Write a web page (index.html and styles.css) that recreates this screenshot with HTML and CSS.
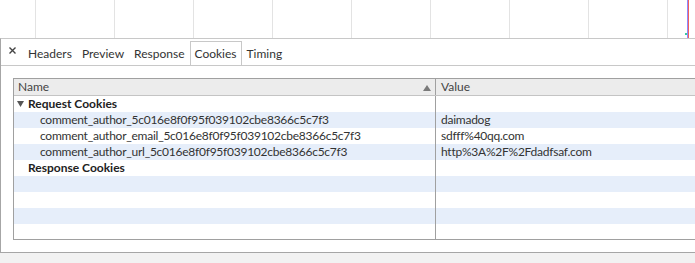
FILE: index.html
```html
<!DOCTYPE html>
<html lang="en">
<head>
  <meta charset="UTF-8">
  <title>Cookies</title>
  <link rel="stylesheet" href="styles.css">
</head>
<body>

  <div class="timeline">
    <div class="tick"></div>
    <div class="tick"></div>
    <div class="tick"></div>
    <div class="tick"></div>
    <div class="tick"></div>
    <div class="tick"></div>
    <div class="tick"></div>
    <div class="tick"></div>
    <div class="tick"></div>
    <div class="marker"></div>
  </div>

  <div class="panel">
    <div class="tabbar">
      <span class="close-btn">
        <svg width="7" height="7" viewBox="0 0 7 7"><path d="M0.5 0.5 L6.5 6.5 M6.5 0.5 L0.5 6.5" stroke="#444" stroke-width="1.4"/></svg>
      </span>
      <span class="tab">Headers</span>
      <span class="tab">Preview</span>
      <span class="tab">Response</span>
      <span class="tab active">Cookies</span>
      <span class="tab">Timing</span>
    </div>

    <div class="content">
      <div class="cookie-table">
        <div class="row head">
          <div class="cell name">Name
            <svg class="sort" width="8" height="6" viewBox="0 0 8 6"><polygon points="4,0 8,6 0,6" fill="#7a7a7a"/></svg>
          </div>
          <div class="cell value">Value</div>
        </div>
        <div class="row">
          <div class="cell name group">
            <svg class="arrow" width="7" height="6" viewBox="0 0 7 6"><polygon points="0,0 7,0 3.5,6" fill="#555"/></svg>Request Cookies
          </div>
          <div class="cell value"></div>
        </div>
        <div class="row stripe">
          <div class="cell name child">comment_author_5c016e8f0f95f039102cbe8366c5c7f3</div>
          <div class="cell value">daimadog</div>
        </div>
        <div class="row">
          <div class="cell name child">comment_author_email_5c016e8f0f95f039102cbe8366c5c7f3</div>
          <div class="cell value">sdfff%40qq.com</div>
        </div>
        <div class="row stripe">
          <div class="cell name child">comment_author_url_5c016e8f0f95f039102cbe8366c5c7f3</div>
          <div class="cell value">http%3A%2F%2Fdadfsaf.com</div>
        </div>
        <div class="row">
          <div class="cell name group plain">Response Cookies</div>
          <div class="cell value"></div>
        </div>
        <div class="row stripe"><div class="cell name"></div><div class="cell value"></div></div>
        <div class="row"><div class="cell name"></div><div class="cell value"></div></div>
        <div class="row stripe"><div class="cell name"></div><div class="cell value"></div></div>
        <div class="row"><div class="cell name"></div><div class="cell value"></div></div>
      </div>
    </div>
  </div>

</body>
</html>
```

FILE: styles.css
```css
body {
  margin: 0;
  background: #f2f2f2;
  font-family: Lato, "Open Sans", sans-serif;
  font-size: 12px;
  color: #333;
  overflow: hidden;
}

.timeline {
  position: relative;
  display: flex;
  height: 38px;
  padding-left: 35px;
  background: white;
}
.tick {
  width: 78px;
  flex: none;
  border-left: 1px solid #e3e3e3;
}
.marker {
  position: absolute;
  left: 687px;
  top: 0;
  width: 1px;
  height: 38px;
  background: #8c8cff;
  border-right: 1px solid #f06060;
}
.marker::before {
  content: "";
  position: absolute;
  left: -2px;
  top: 33px;
  width: 2px;
  height: 2px;
  background: #3cc8a0;
}

.panel {
  background: white;
  border-top: 1px solid #c8c8c8;
  border-left: 1px solid #a6a6a6;
  border-bottom: 1px solid #a6a6a6;
  height: 213px;
}

.tabbar {
  display: flex;
  align-items: flex-end;
  height: 26px;
  border-bottom: 1px solid #c8c8c8;
}
.close-btn {
  display: flex;
  align-items: center;
  height: 24px;
  padding: 0 7px 0 8px;
  margin-bottom: 3px;
}
.tab {
  height: 24px;
  line-height: 23px;
  padding: 0 4px;
  border: 1px solid transparent;
  border-bottom: none;
  box-sizing: border-box;
  color: #333;
}
.tab.active {
  border-color: #c8c8c8;
}

.content {
  padding: 12px 0 0 12px;
}
.cookie-table {
  height: 160px;
  border: 1px solid #a0a0a0;
  border-right: none;
  overflow: hidden;
  letter-spacing: -0.25px;
}
.row {
  display: flex;
  height: 16px;
  line-height: 16px;
}
.row.stripe {
  background: #e6eefa;
}
.row.head {
  background: #ececec;
  border-bottom: 1px solid #c4c4c4;
  color: #444;
  letter-spacing: 0;
}
.cell {
  white-space: nowrap;
  overflow: hidden;
  box-sizing: border-box;
}
.cell.name {
  position: relative;
  width: 422px;
  flex: none;
  padding-left: 4px;
  border-right: 1px solid #a0a0a0;
}
.cell.value {
  flex: 1;
  padding-left: 5px;
}
.sort {
  position: absolute;
  right: 4px;
  top: 6px;
}
.cell.group {
  font-weight: bold;
  color: #222;
  display: flex;
  align-items: center;
  letter-spacing: 0;
}
.group .arrow {
  margin-right: 4px;
  margin-left: -1px;
}
.cell.group.plain {
  padding-left: 14px;
}
.cell.child {
  padding-left: 26px;
}
```
